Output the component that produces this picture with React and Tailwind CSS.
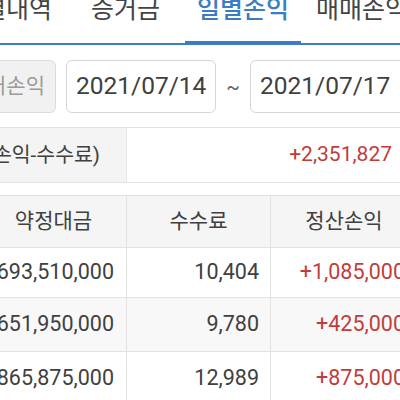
import React from "react"

const font = { fontFamily: 'Roboto, "Noto Sans CJK KR", sans-serif' }

const tabs = [
  { label: "체결내역", w: "w-[120px]" },
  { label: "증거금", w: "w-[119px]" },
  { label: "일별손익", w: "w-[116px]", active: true },
  { label: "매매손익", w: "w-[122px]" },
]

const rows = [
  { amount: "693,510,000", fee: "10,404", pl: "+1,085,000", h: "h-[50px]", bg: "bg-white" },
  { amount: "651,950,000", fee: "9,780", pl: "+425,000", h: "h-[54px]", bg: "bg-[#f8f8f8]" },
  { amount: "865,875,000", fee: "12,989", pl: "+875,000", h: "h-[54px]", bg: "bg-white" },
]

const App = () => {
  return (
    <div className="w-[400px] h-[400px] overflow-hidden bg-white text-[#404040]" style={font}>
      {/* tabs */}
      <div className="h-[45px] border-b-2 border-[#3b7cc4]">
        <div className="flex h-full ml-[-54px] shrink-0">
          {tabs.map((t) => (
            <div
              key={t.label}
              className={`${t.w} shrink-0 flex justify-center ${
                t.active ? "border-b-4 border-[#3b7cc4] mb-[-2px] text-[#3b7cc4] font-medium" : "text-[#444]"
              }`}
            >
              <span className="text-[25px] leading-[25px] mt-[-3px] whitespace-nowrap">{t.label}</span>
            </div>
          ))}
        </div>
      </div>

      {/* period */}
      <div className="flex items-center mt-[15px] h-[53px]">
        <div className="w-[80px] ml-[-24px] h-full shrink-0 flex items-center justify-end pr-[10px] bg-[#f1f1f1] border border-[#dcdcdc] rounded-md">
          <span className="text-[21px] text-[#9a9a9a] whitespace-nowrap">과거손익</span>
        </div>
        <div className="w-[150px] ml-[10px] h-full shrink-0 flex items-center pl-[9px] border border-[#d6d6d6] rounded-md">
          <span className="text-[24.5px] whitespace-nowrap">2021/07/14</span>
        </div>
        <div className="w-[34px] shrink-0 text-center text-[20px] text-[#666]">~</div>
        <div className="w-[160px] h-full shrink-0 flex items-center pl-[9px] border border-[#d6d6d6] rounded-md">
          <span className="text-[24.5px] whitespace-nowrap">2021/07/17</span>
        </div>
      </div>

      {/* total */}
      <div className="flex mt-[14px] h-[56px] border-y border-[#e2e2e2]">
        <div className="w-[127px] shrink-0 flex items-center justify-end pr-[26px] bg-[#f4f4f4] border-r border-[#e6e6e6]">
          <span className="text-[20.5px] whitespace-nowrap">실현손익(매매손익-수수료)</span>
        </div>
        <div className="flex-1 flex items-center justify-end pr-[8px]">
          <span className="text-[21px] text-[#bf3d3b]">+2,351,827</span>
        </div>
      </div>

      {/* table */}
      <div className="mt-[12px] ml-[-19px] w-[436px] border-t border-[#e2e2e2]">
        <div className="grid grid-cols-[146px_144px_146px] h-[52px] bg-[#f5f5f5] border-b border-[#e2e2e2]">
          <div className="flex items-center justify-center border-r border-[#e2e2e2] text-[21px]">약정대금</div>
          <div className="flex items-center justify-center border-r border-[#e2e2e2] text-[21px]">수수료</div>
          <div className="flex items-center justify-center text-[21px]">정산손익</div>
        </div>
        {rows.map((r) => (
          <div key={r.amount} className={`grid grid-cols-[146px_144px_146px] ${r.h} ${r.bg} border-b border-[#e2e2e2]`}>
            <div className="flex items-center justify-end pr-[12px] border-r border-[#e2e2e2] text-[21.5px]">{r.amount}</div>
            <div className="flex items-center justify-end pr-[11px] border-r border-[#e2e2e2] text-[21.5px]">{r.fee}</div>
            <div className="flex items-center justify-end pr-[12px] text-[21.5px] text-[#bf3d3b]">{r.pl}</div>
          </div>
        ))}
      </div>
    </div>
  )
}

export default App
